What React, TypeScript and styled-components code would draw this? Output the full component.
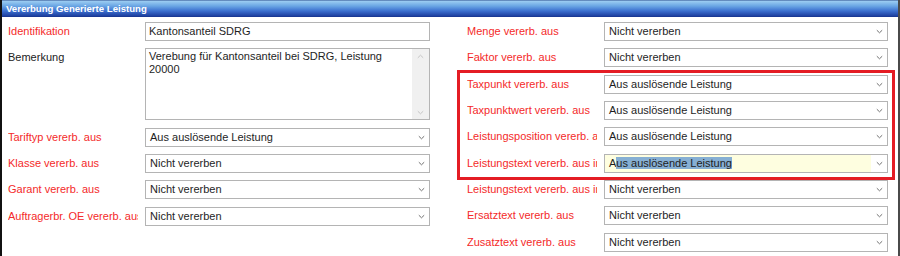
import { createGlobalStyle } from 'styled-components';
import styled from 'styled-components';

const GlobalStyle = createGlobalStyle`
  html, body {
    margin: 0;
    padding: 0;
    background: #ffffff;
  }
  body {
    font-family: "Liberation Sans", Arial, sans-serif;
    font-size: 11px;
    color: #222222;
  }
`;

const Window = styled.div`
  width: 900px;
  height: 256px;
  box-sizing: border-box;
  border-left: 2px solid #111111;
  border-right: 2px solid #4a4a4a;
  background: #ffffff;
  overflow: hidden;
`;

const TitleBar = styled.div`
  height: 17px;
  box-sizing: border-box;
  padding: 0 0 0 4px;
  display: flex;
  align-items: center;
  background: linear-gradient(
    to bottom,
    #2a4a8a 0px,
    #9ccdf2 1px,
    #6aa6e4 6px,
    #3b6fcf 11px,
    #1d3f9f 16px,
    #17338a 17px
  );
  color: #ffffff;
  font-weight: bold;
  font-size: 9.6px;
  white-space: nowrap;
`;

const Body = styled.div`
  display: grid;
  grid-template-columns: 422px 421px;
  column-gap: 37px;
  padding: 5px 0 0 6px;
`;

const Column = styled.div`
  display: flex;
  flex-direction: column;
  gap: 7.33px;
`;

const Row = styled.div`
  display: flex;
  align-items: flex-start;
`;

const Label = styled.div<{ $plain?: boolean }>`
  flex: 0 0 130px;
  margin-right: 7px;
  line-height: 19px;
  white-space: nowrap;
  overflow: hidden;
  color: ${p => (p.$plain ? '#222222' : '#f42a2a')};
`;

const TextBox = styled.div`
  flex: 1;
  height: 19px;
  box-sizing: border-box;
  border: 1px solid #b4b4b4;
  padding: 0 3px;
  line-height: 17px;
  white-space: nowrap;
  overflow: hidden;
  color: #1e1e1e;
`;

const MemoBox = styled.div`
  flex: 1;
  height: 72px;
  box-sizing: border-box;
  border: 1px solid #b4b4b4;
  display: flex;
`;

const MemoText = styled.div`
  flex: 1;
  padding: 1px 3px;
  line-height: 13px;
  color: #1e1e1e;
`;

const ScrollTrack = styled.div`
  flex: 0 0 17px;
  background: #f0f0f0;
  display: flex;
  flex-direction: column;
  justify-content: space-between;
  align-items: center;
  padding: 5px 0 4px;
`;

const SelectBox = styled.div`
  flex: 1;
  height: 19px;
  box-sizing: border-box;
  border: 1px solid #b4b4b4;
  display: flex;
  background: #ffffff;
`;

const SelectValue = styled.div<{ $focused?: boolean }>`
  flex: 1;
  padding: 0 4px;
  line-height: 17px;
  white-space: nowrap;
  overflow: hidden;
  color: #1e1e1e;
  background: ${p => (p.$focused ? '#fefee0' : 'transparent')};
`;

const Selected = styled.span`
  background: #86afd3;
`;

const ArrowCell = styled.div`
  flex: 0 0 16px;
  display: flex;
  align-items: center;
  justify-content: center;
`;

const HighlightFrame = styled.div`
  display: flex;
  flex-direction: column;
  gap: 7.33px;
  border: 3px solid #e41c24;
  margin: -4.5px -7px -7px -10px;
  padding: 1.5px 4px 4px 7px;
`;

function Chevron({ up, color = '#707070' }: { up?: boolean; color?: string }) {
  return (
    <svg width="7" height="5" viewBox="0 0 7 5">
      <path
        d={up ? 'M0.8 3.8 L3.5 1.2 L6.2 3.8' : 'M0.8 1.2 L3.5 3.8 L6.2 1.2'}
        fill="none"
        stroke={color}
        strokeWidth="1"
      />
    </svg>
  );
}

type SelectProps = { value: string; focused?: boolean };

function Select({ value, focused }: SelectProps) {
  return (
    <SelectBox>
      <SelectValue $focused={focused}>
        {focused ? (
          <>
            {value.charAt(0)}
            <Selected>{value.slice(1)}</Selected>
          </>
        ) : (
          value
        )}
      </SelectValue>
      <ArrowCell>
        <Chevron />
      </ArrowCell>
    </SelectBox>
  );
}

const AUS = 'Aus auslösende Leistung';
const NICHT = 'Nicht vererben';

export default function App() {
  return (
    <>
      <GlobalStyle />
      <Window>
        <TitleBar>Vererbung Generierte Leistung</TitleBar>
        <Body>
          <Column>
            <Row>
              <Label>Identifikation</Label>
              <TextBox>Kantonsanteil SDRG</TextBox>
            </Row>
            <Row>
              <Label $plain>Bemerkung</Label>
              <MemoBox>
                <MemoText>Verebung für Kantonsanteil bei SDRG, Leistung 20000</MemoText>
                <ScrollTrack>
                  <Chevron up color="#c4c4c4" />
                  <Chevron color="#c4c4c4" />
                </ScrollTrack>
              </MemoBox>
            </Row>
            <Row>
              <Label>Tariftyp vererb. aus</Label>
              <Select value={AUS} />
            </Row>
            <Row>
              <Label>Klasse vererb. aus</Label>
              <Select value={NICHT} />
            </Row>
            <Row>
              <Label>Garant vererb. aus</Label>
              <Select value={NICHT} />
            </Row>
            <Row>
              <Label>Auftragerbr. OE vererb. aus</Label>
              <Select value={NICHT} />
            </Row>
          </Column>
          <Column>
            <Row>
              <Label>Menge vererb. aus</Label>
              <Select value={NICHT} />
            </Row>
            <Row>
              <Label>Faktor vererb. aus</Label>
              <Select value={NICHT} />
            </Row>
            <HighlightFrame>
              <Row>
                <Label>Taxpunkt vererb. aus</Label>
                <Select value={AUS} />
              </Row>
              <Row>
                <Label>Taxpunktwert vererb. aus</Label>
                <Select value={AUS} />
              </Row>
              <Row>
                <Label>Leistungsposition vererb. aus</Label>
                <Select value={AUS} />
              </Row>
              <Row>
                <Label>Leistungstext vererb. aus intern</Label>
                <Select value={AUS} focused />
              </Row>
            </HighlightFrame>
            <Row>
              <Label>Leistungstext vererb. aus intern</Label>
              <Select value={NICHT} />
            </Row>
            <Row>
              <Label>Ersatztext vererb. aus</Label>
              <Select value={NICHT} />
            </Row>
            <Row>
              <Label>Zusatztext vererb. aus</Label>
              <Select value={NICHT} />
            </Row>
          </Column>
        </Body>
      </Window>
    </>
  );
}
